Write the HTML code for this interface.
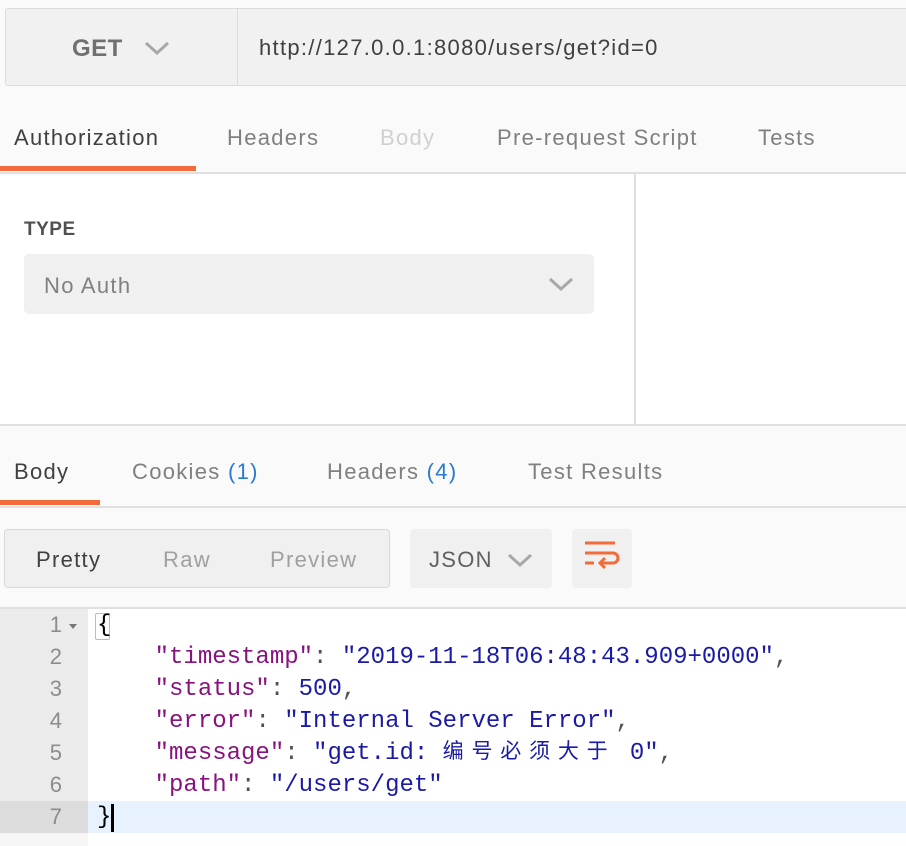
<!DOCTYPE html>
<html><head><meta charset="utf-8"><style>
*{margin:0;padding:0;box-sizing:border-box}
body{width:906px;height:846px;overflow:hidden;background:#fafafa;font-family:"Liberation Sans","Noto Sans CJK SC",sans-serif;position:relative;color:#505050}
.a{position:absolute}
.t{font-size:22px;color:#808080;position:absolute;white-space:nowrap;letter-spacing:1.3px}
.mono{font-family:"Liberation Mono","Noto Sans CJK SC",monospace;font-size:24px;line-height:32px;height:32px;white-space:pre;position:absolute;left:97px}
.k{color:#881280}.s{color:#1a1aa6}.n{color:#1a1aa6}.p{color:#000}
.ln{position:absolute;left:0;width:88px;text-align:right;padding-right:26px;font-family:"Liberation Sans",sans-serif;font-size:22px;color:#8c8c8c}
.cj{display:inline-block;width:28.8px;font-size:21px;line-height:32px;height:32px;vertical-align:top;text-align:left}
</style></head><body>
<div class="a" style="left:5px;top:8px;width:920px;height:78px;background:#f1f1f1;border:1px solid #dcdcdc;border-radius:3px"></div>
<div class="a" style="left:237px;top:9px;width:1px;height:76px;background:#dcdcdc"></div>
<div class="t" style="left:72px;top:35px;font-size:24px;font-weight:bold;color:#707070;letter-spacing:0.5px">GET</div>
<svg class="a" style="left:144px;top:40px" width="26" height="16"><path d="M2 3 L13 13 L24 3" fill="none" stroke="#a8a8a8" stroke-width="3"/></svg>
<div class="t" style="left:259px;top:35px;font-size:22px;color:#404040;letter-spacing:1.3px">http://127.0.0.1:8080/users/get?id=0</div>

<div class="t" style="left:14px;top:125px;color:#404040">Authorization</div>
<div class="t" style="left:227px;top:125px">Headers</div>
<div class="t" style="left:380px;top:125px;color:#d0d0d0">Body</div>
<div class="t" style="left:497px;top:125px">Pre-request Script</div>
<div class="t" style="left:758px;top:125px">Tests</div>
<div class="a" style="left:0;top:166px;width:196px;height:5px;background:#f26b3a"></div>
<div class="a" style="left:0;top:172px;width:906px;height:2px;background:#e0e0e0"></div>
<div class="a" style="left:0;top:174px;width:906px;height:250px;background:#fff"></div>
<div class="a" style="left:634px;top:174px;width:2px;height:250px;background:#e0e0e0"></div>
<div class="t" style="left:24px;top:219px;font-size:19px;font-weight:bold;color:#505050;letter-spacing:0.5px">TYPE</div>
<div class="a" style="left:24px;top:254px;width:570px;height:60px;background:#f0f0f0;border-radius:5px"></div>
<div class="t" style="left:44px;top:273px;color:#808080">No Auth</div>
<svg class="a" style="left:548px;top:276px" width="26" height="16"><path d="M2 3 L13 13 L24 3" fill="none" stroke="#a8a8a8" stroke-width="3"/></svg>
<div class="a" style="left:0;top:424px;width:906px;height:2px;background:#e0e0e0"></div>

<div class="t" style="left:14px;top:459px;color:#404040">Body</div>
<div class="t" style="left:132px;top:459px">Cookies <span style="color:#2a7bd0">(1)</span></div>
<div class="t" style="left:327px;top:459px">Headers <span style="color:#2a7bd0">(4)</span></div>
<div class="t" style="left:528px;top:459px">Test Results</div>
<div class="a" style="left:0;top:500px;width:100px;height:5px;background:#f26b3a"></div>
<div class="a" style="left:0;top:506px;width:906px;height:2px;background:#e0e0e0"></div>

<div class="a" style="left:4px;top:529px;width:386px;height:59px;background:#f0f0f0;border:1px solid #d8d8d8;border-radius:4px"></div>
<div class="t" style="left:36px;top:547px;color:#404040">Pretty</div>
<div class="t" style="left:163px;top:547px;color:#a0a0a0">Raw</div>
<div class="t" style="left:270px;top:547px;color:#a0a0a0">Preview</div>
<div class="a" style="left:410px;top:529px;width:142px;height:59px;background:#f0f0f0;border-radius:4px"></div>
<div class="t" style="left:429px;top:547px;color:#606060">JSON</div>
<svg class="a" style="left:507px;top:552px" width="26" height="16"><path d="M2 3 L13 13 L24 3" fill="none" stroke="#a8a8a8" stroke-width="3"/></svg>
<div class="a" style="left:572px;top:529px;width:60px;height:59px;background:#f0f0f0;border-radius:4px"></div>
<svg class="a" style="left:583px;top:540px" width="38" height="38"><g fill="none" stroke="#f26b3a" stroke-width="3"><path d="M2 3H32"/><path d="M2 13H30a5 5 0 0 1 0 10H18"/><path d="M2 23H11"/><path d="M22 18l-5 5 5 5"/></g></svg>

<div class="a" style="left:0;top:607px;width:906px;height:2px;background:#e0e0e0"></div>
<div class="a" style="left:0;top:609px;width:906px;height:237px;background:#fff"></div>
<div class="a" style="left:0;top:609px;width:88px;height:192px;background:#ebebeb"></div>
<div class="a" style="left:88px;top:801px;width:818px;height:32px;background:#e8f2ff"></div>
<div class="a" style="left:0;top:801px;width:88px;height:32px;background:#dcdcdc"></div>
<div class="a" style="left:0;top:833px;width:88px;height:13px;background:#f6f6f6"></div>
<div class="ln" style="top:612px">1</div><div class="a" style="left:69px;top:624px;border:4px solid transparent;border-top:5px solid #777"></div>
<div class="ln" style="top:644px">2</div>
<div class="ln" style="top:676px">3</div>
<div class="ln" style="top:708px">4</div>
<div class="ln" style="top:740px">5</div>
<div class="ln" style="top:772px">6</div>
<div class="ln" style="top:804px">7</div>
<div class="a" style="left:95px;top:613px;width:15px;height:27px;border:1px solid #bbb;border-radius:2px"></div>
<div class="mono p" style="top:610px">{</div>
<div class="mono" style="top:642px">    <span class="k">"timestamp"</span>: <span class="s">"2019-11-18T06:48:43.909+0000"</span>,</div>
<div class="mono" style="top:674px">    <span class="k">"status"</span>: <span class="n">500</span>,</div>
<div class="mono" style="top:706px">    <span class="k">"error"</span>: <span class="s">"Internal Server Error"</span>,</div>
<div class="mono" style="top:738px">    <span class="k">"message"</span>: <span class="s">"get.id: <span class="cj">编</span><span class="cj">号</span><span class="cj">必</span><span class="cj">须</span><span class="cj">大</span><span class="cj">于</span> 0"</span>,</div>
<div class="mono" style="top:770px">    <span class="k">"path"</span>: <span class="s">"/users/get"</span></div>
<div class="mono p" style="top:802px">}</div>
<div class="a" style="left:111px;top:804px;width:3px;height:28px;background:#000"></div>
</body></html>
